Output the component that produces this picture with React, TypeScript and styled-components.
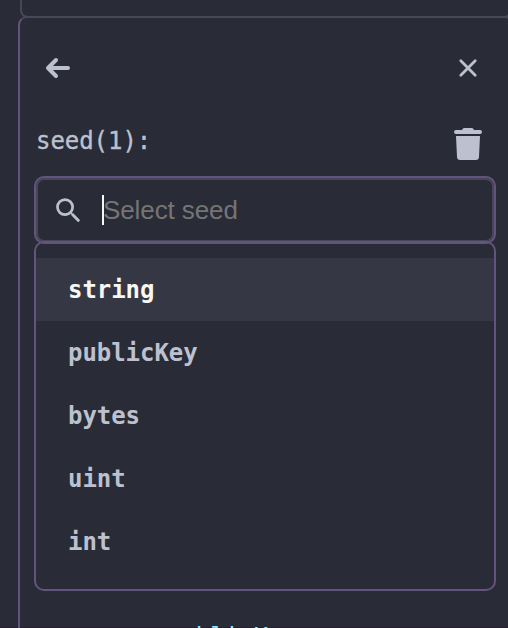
import React from "react";
import styled, { createGlobalStyle } from "styled-components";

const GlobalStyle = createGlobalStyle`
  * { box-sizing: border-box; }
  body { margin: 0; background: #292b36; overflow: hidden; }
`;

const mono = '"DejaVu Sans Mono", "Liberation Mono", monospace';

const Page = styled.main`
  width: 508px;
  height: 628px;
  overflow: hidden;
  background: #292b36;
  box-shadow: inset 0 -1px 0 #291f30;
  color: #bdc1cf;
  font-family: ${mono};
`;

const PreviousCard = styled.div`
  width: 492px;
  height: 18px;
  margin-left: 20px;
  border: 2px solid #474857;
  border-top: 0;
  border-radius: 0 0 8px 8px;
`;

const Panel = styled.section`
  width: 496px;
  height: 640px;
  margin: -2px 0 0 18px;
  padding: 0 14px;
  border: 2px solid #64537f;
  border-top-color: #474857;
  border-radius: 9px;
`;

const Header = styled.header`
  display: flex;
  justify-content: space-between;
  align-items: center;
  height: 100px;
  padding: 0 14px 0 10px;
`;

const IconButton = styled.button`
  display: flex;
  padding: 0;
  border: 0;
  background: none;
  color: inherit;
`;

const SeedHeader = styled.div`
  display: flex;
  justify-content: space-between;
  width: 448px;
  height: 58px;
  padding-left: 2px;
`;

const SeedLabel = styled.span`
  padding-top: 7px;
  font-size: 24px;
  line-height: 32px;
  letter-spacing: -0.05px;
  -webkit-text-stroke: 0.35px currentColor;
`;

const TrashButton = styled(IconButton)`
  align-items: flex-start;
  padding-top: 10px;
`;

const SearchField = styled.label`
  display: flex;
  align-items: center;
  width: 462px;
  height: 68px;
  padding-left: 16px;
  border: 2px solid #64537f;
  border-radius: 10px;
  box-shadow: inset 0 0 0 2px #474857;
`;

const Caret = styled.span`
  width: 2px;
  height: 30px;
  margin-left: 17px;
  background: #f8f8f2;
`;

const Placeholder = styled.span`
  margin-left: -1px;
  color: #757575;
  font: 26px/32px "Liberation Sans", Arial, sans-serif;
  letter-spacing: -0.1px;
`;

const Options = styled.ul`
  width: 462px;
  height: 350px;
  margin: -3px 0 0;
  padding: 15px 0;
  border: 2px solid #64537f;
  border-radius: 10px;
  list-style: none;
`;

const Option = styled.li<{ $active?: boolean }>`
  height: 63px;
  padding-left: 32px;
  background: ${({ $active }) => ($active ? "#363744" : "transparent")};
  color: ${({ $active }) => ($active ? "#f8f8f2" : "#bdc1cf")};
  font-size: 24px;
  font-weight: 700;
  line-height: 64px;
  letter-spacing: -0.05px;
`;

const TypeName = styled.div`
  padding: 32px 0 0 133px;
  color: #8be9fd;
  font-size: 24px;
  line-height: 28px;
  letter-spacing: -0.05px;
`;

const options = ["string", "publicKey", "bytes", "uint", "int"];

export default function App() {
  return (
    <>
      <GlobalStyle />
      <Page>
        <PreviousCard />
        <Panel>
          <Header>
            <IconButton aria-label="Back">
              <svg width="28" height="24" viewBox="0 0 28 24" fill="none" stroke="currentColor" strokeWidth="4" strokeLinecap="round" strokeLinejoin="round">
                <path d="M12 4 4 12l8 8M4 12h20" />
              </svg>
            </IconButton>
            <IconButton aria-label="Close">
              <svg width="32" height="24" viewBox="0 0 32 24" fill="none" stroke="currentColor" strokeWidth="2.8" strokeLinecap="round">
                <path d="m8.8 4.8 14.4 14.4m0-14.4L8.8 19.2" />
              </svg>
            </IconButton>
          </Header>
          <SeedHeader>
            <SeedLabel>seed(1):</SeedLabel>
            <TrashButton aria-label="Delete seed">
              <svg width="28" height="32" viewBox="0 0 28 32" fill="currentColor">
                <path d="M10 0h8q1 0 2 2h6q2 0 2 2t-2 2H2Q0 6 0 4t2-2h6q1-2 2-2ZM2 8h24l-1 21q-.2 3-3 3H6q-2.800 0-3-3Z" />
              </svg>
            </TrashButton>
          </SeedHeader>
          <SearchField>
            <svg width="33" height="33" viewBox="0 0 24 24" fill="currentColor">
              <path d="M15.5 14h-.79l-.28-.27A6.471 6.471 0 0 0 16 9.500 6.500 6.500 0 1 0 9.500 16c1.610 0 3.090-.59 4.230-1.570l.27.28v.79l5 4.990L20.490 19l-4.990-5Zm-6 0C7.010 14 5 11.990 5 9.500S7.010 5 9.500 5 14 7.010 14 9.500 11.990 14 9.500 14Z" />
            </svg>
            <Caret />
            <Placeholder>Select seed</Placeholder>
          </SearchField>
          <Options>
            {options.map((name, index) => (
              <Option key={name} $active={index === 0}>{name}</Option>
            ))}
          </Options>
          <TypeName>publicKey</TypeName>
        </Panel>
      </Page>
    </>
  );
}
